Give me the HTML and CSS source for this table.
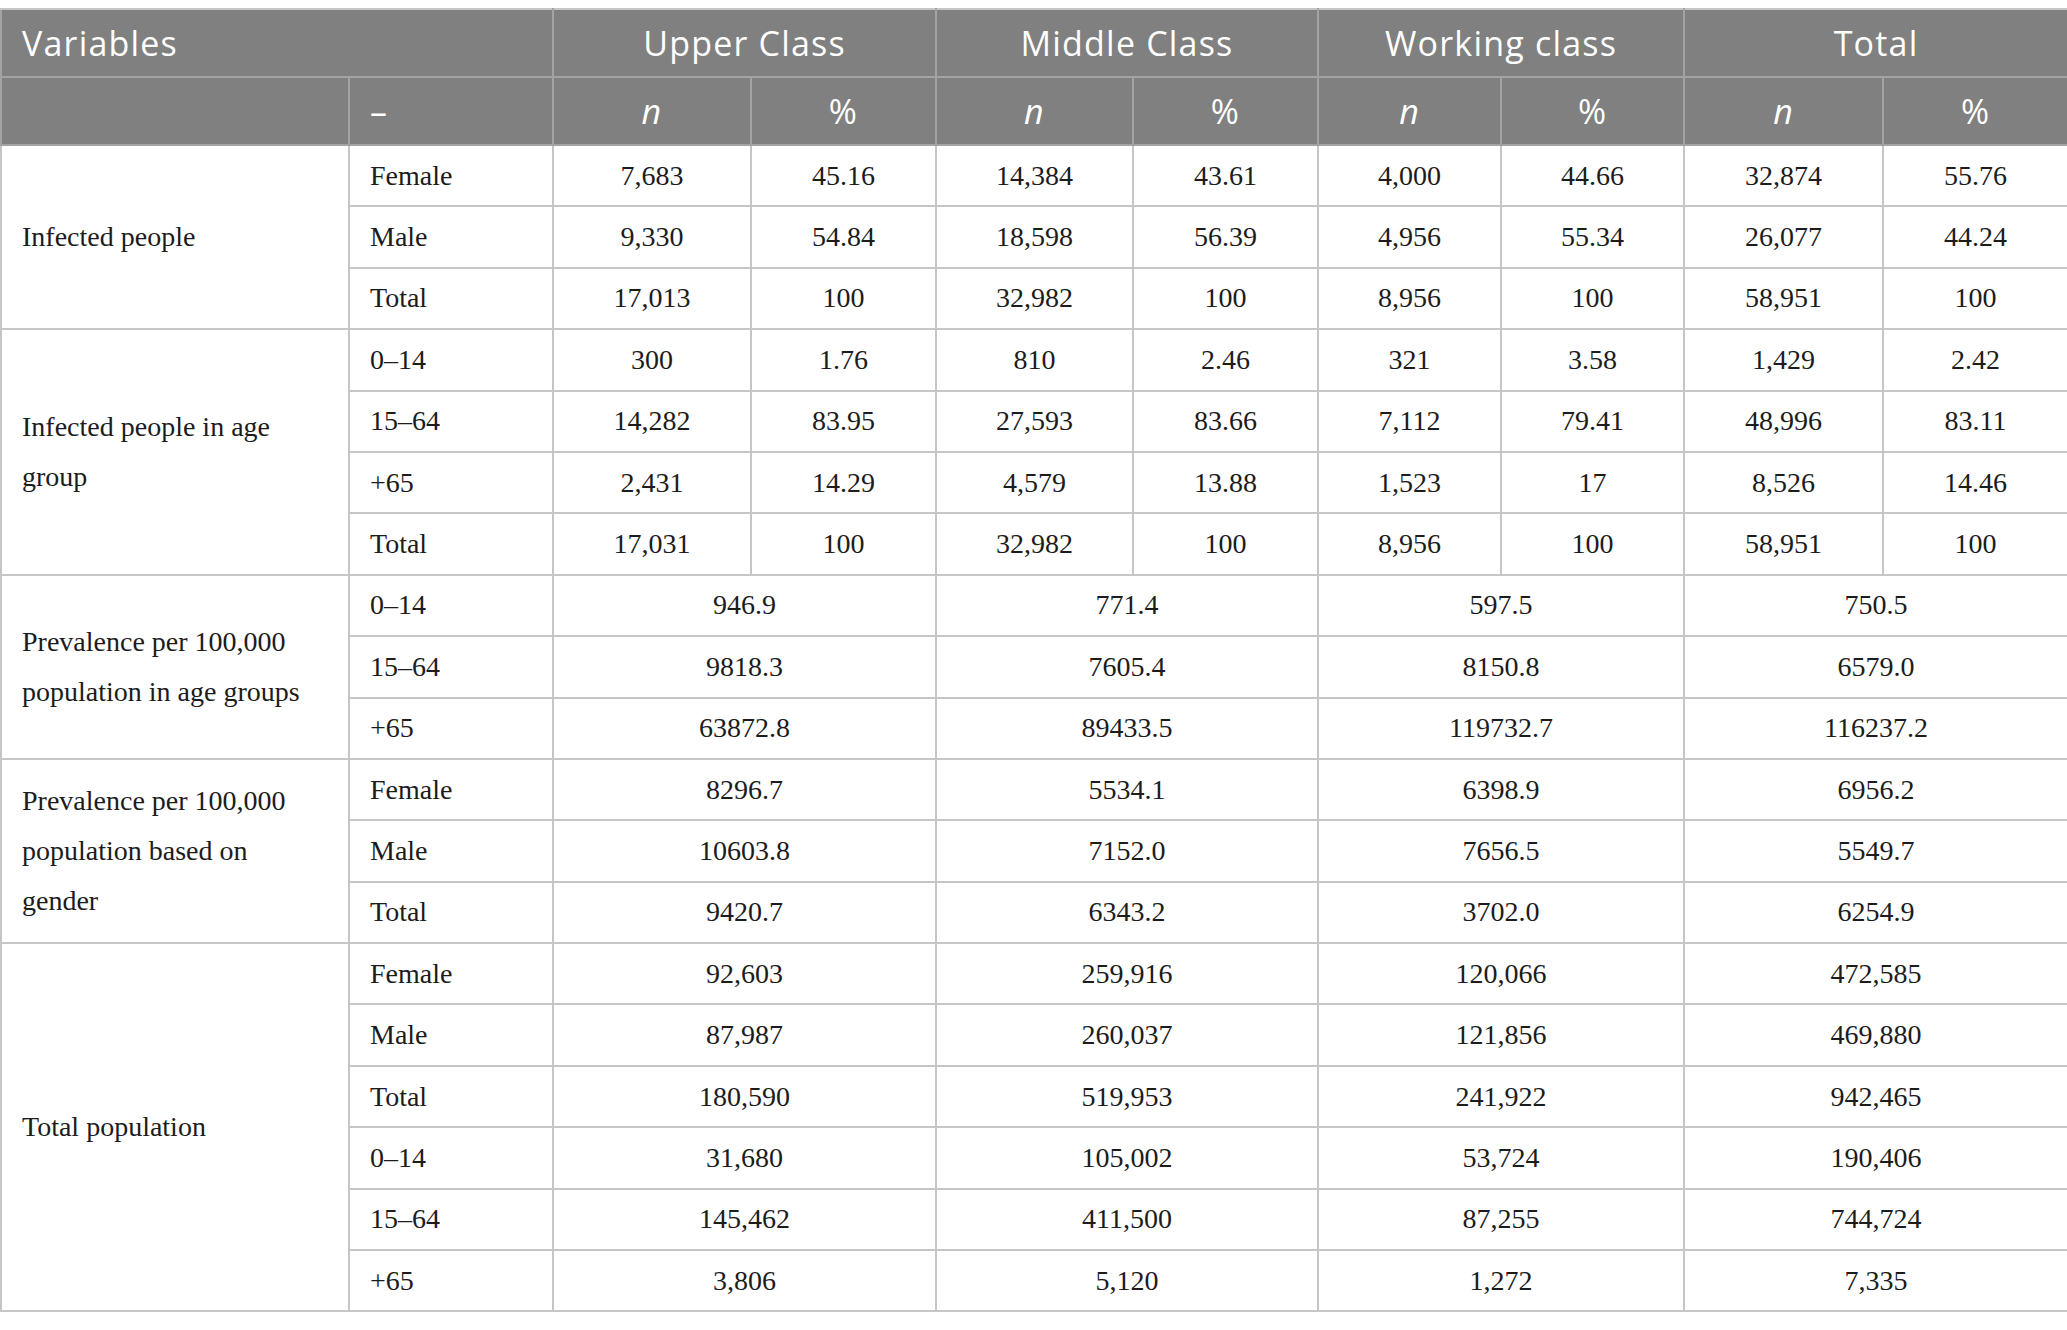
FILE: index.html
```html
<!DOCTYPE html>
<html lang="en">
<head>
<meta charset="utf-8">
<title>Table</title>
<link rel="stylesheet" href="styles.css">
</head>
<body>
<table class="data">
  <colgroup>
    <col class="c-var"><col class="c-sub">
    <col class="c-n1"><col class="c-p1">
    <col class="c-n2"><col class="c-p2">
    <col class="c-n3"><col class="c-p3">
    <col class="c-n4"><col class="c-p4">
  </colgroup>
  <thead>
    <tr class="h1">
      <th colspan="2" class="left">Variables</th>
      <th colspan="2">Upper Class</th>
      <th colspan="2">Middle Class</th>
      <th colspan="2">Working class</th>
      <th colspan="2">Total</th>
    </tr>
    <tr class="h2">
      <th></th>
      <th class="left">–</th>
      <th><i>n</i></th><th>%</th>
      <th><i>n</i></th><th>%</th>
      <th><i>n</i></th><th>%</th>
      <th><i>n</i></th><th>%</th>
    </tr>
  </thead>
  <tbody>
    <tr><td rowspan="3" class="var">Infected people</td><td class="sub">Female</td><td>7,683</td><td>45.16</td><td>14,384</td><td>43.61</td><td>4,000</td><td>44.66</td><td>32,874</td><td>55.76</td></tr>
    <tr><td class="sub">Male</td><td>9,330</td><td>54.84</td><td>18,598</td><td>56.39</td><td>4,956</td><td>55.34</td><td>26,077</td><td>44.24</td></tr>
    <tr><td class="sub">Total</td><td>17,013</td><td>100</td><td>32,982</td><td>100</td><td>8,956</td><td>100</td><td>58,951</td><td>100</td></tr>

    <tr><td rowspan="4" class="var">Infected people in age group</td><td class="sub">0–14</td><td>300</td><td>1.76</td><td>810</td><td>2.46</td><td>321</td><td>3.58</td><td>1,429</td><td>2.42</td></tr>
    <tr><td class="sub">15–64</td><td>14,282</td><td>83.95</td><td>27,593</td><td>83.66</td><td>7,112</td><td>79.41</td><td>48,996</td><td>83.11</td></tr>
    <tr><td class="sub">+65</td><td>2,431</td><td>14.29</td><td>4,579</td><td>13.88</td><td>1,523</td><td>17</td><td>8,526</td><td>14.46</td></tr>
    <tr><td class="sub">Total</td><td>17,031</td><td>100</td><td>32,982</td><td>100</td><td>8,956</td><td>100</td><td>58,951</td><td>100</td></tr>

    <tr><td rowspan="3" class="var">Prevalence per 100,000 population in age groups</td><td class="sub">0–14</td><td colspan="2">946.9</td><td colspan="2">771.4</td><td colspan="2">597.5</td><td colspan="2">750.5</td></tr>
    <tr><td class="sub">15–64</td><td colspan="2">9818.3</td><td colspan="2">7605.4</td><td colspan="2">8150.8</td><td colspan="2">6579.0</td></tr>
    <tr><td class="sub">+65</td><td colspan="2">63872.8</td><td colspan="2">89433.5</td><td colspan="2">119732.7</td><td colspan="2">116237.2</td></tr>

    <tr><td rowspan="3" class="var">Prevalence per 100,000 population based on gender</td><td class="sub">Female</td><td colspan="2">8296.7</td><td colspan="2">5534.1</td><td colspan="2">6398.9</td><td colspan="2">6956.2</td></tr>
    <tr><td class="sub">Male</td><td colspan="2">10603.8</td><td colspan="2">7152.0</td><td colspan="2">7656.5</td><td colspan="2">5549.7</td></tr>
    <tr><td class="sub">Total</td><td colspan="2">9420.7</td><td colspan="2">6343.2</td><td colspan="2">3702.0</td><td colspan="2">6254.9</td></tr>

    <tr><td rowspan="6" class="var">Total population</td><td class="sub">Female</td><td colspan="2">92,603</td><td colspan="2">259,916</td><td colspan="2">120,066</td><td colspan="2">472,585</td></tr>
    <tr><td class="sub">Male</td><td colspan="2">87,987</td><td colspan="2">260,037</td><td colspan="2">121,856</td><td colspan="2">469,880</td></tr>
    <tr><td class="sub">Total</td><td colspan="2">180,590</td><td colspan="2">519,953</td><td colspan="2">241,922</td><td colspan="2">942,465</td></tr>
    <tr><td class="sub">0–14</td><td colspan="2">31,680</td><td colspan="2">105,002</td><td colspan="2">53,724</td><td colspan="2">190,406</td></tr>
    <tr><td class="sub">15–64</td><td colspan="2">145,462</td><td colspan="2">411,500</td><td colspan="2">87,255</td><td colspan="2">744,724</td></tr>
    <tr><td class="sub">+65</td><td colspan="2">3,806</td><td colspan="2">5,120</td><td colspan="2">1,272</td><td colspan="2">7,335</td></tr>
  </tbody>
</table>
</body>
</html>
```

FILE: styles.css
```css
html, body {
  margin: 0;
  padding: 0;
  background: #ffffff;
  overflow: hidden;
}

.data {
  margin-top: 8px;
  width: 2067px;
  table-layout: fixed;
  border-collapse: collapse;
  font-family: "Liberation Serif", "Times New Roman", serif;
  font-size: 28px;
  color: #1c1c1c;
}

.c-var { width: 348px; }
.c-sub { width: 204px; }
.c-n1 { width: 198px; }
.c-p1 { width: 185px; }
.c-n2 { width: 197px; }
.c-p2 { width: 185px; }
.c-n3 { width: 183px; }
.c-p3 { width: 183px; }
.c-n4 { width: 199px; }
.c-p4 { width: 185px; }

.data th {
  background: #7f807f;
  color: #ffffff;
  font-family: "Open Sans", Lato, sans-serif;
  font-weight: 400;
  font-size: 34px;
  letter-spacing: 1.2px;
  text-align: center;
  vertical-align: middle;
  padding: 0 20px;
  border: 2px solid #a2a3a2;
  border-top-color: #c6c6c6;
}

.data th i {
  font-style: italic;
}

.data th.left {
  text-align: left;
}

.data .h1 { height: 68px; }
.data .h2 { height: 68px; }

.data td {
  border: 2px solid #c6c6c6;
  padding: 0 20px;
  height: 59.4px;
  text-align: center;
  vertical-align: middle;
  line-height: 50px;
}

.data td.var,
.data td.sub {
  text-align: left;
}
```
